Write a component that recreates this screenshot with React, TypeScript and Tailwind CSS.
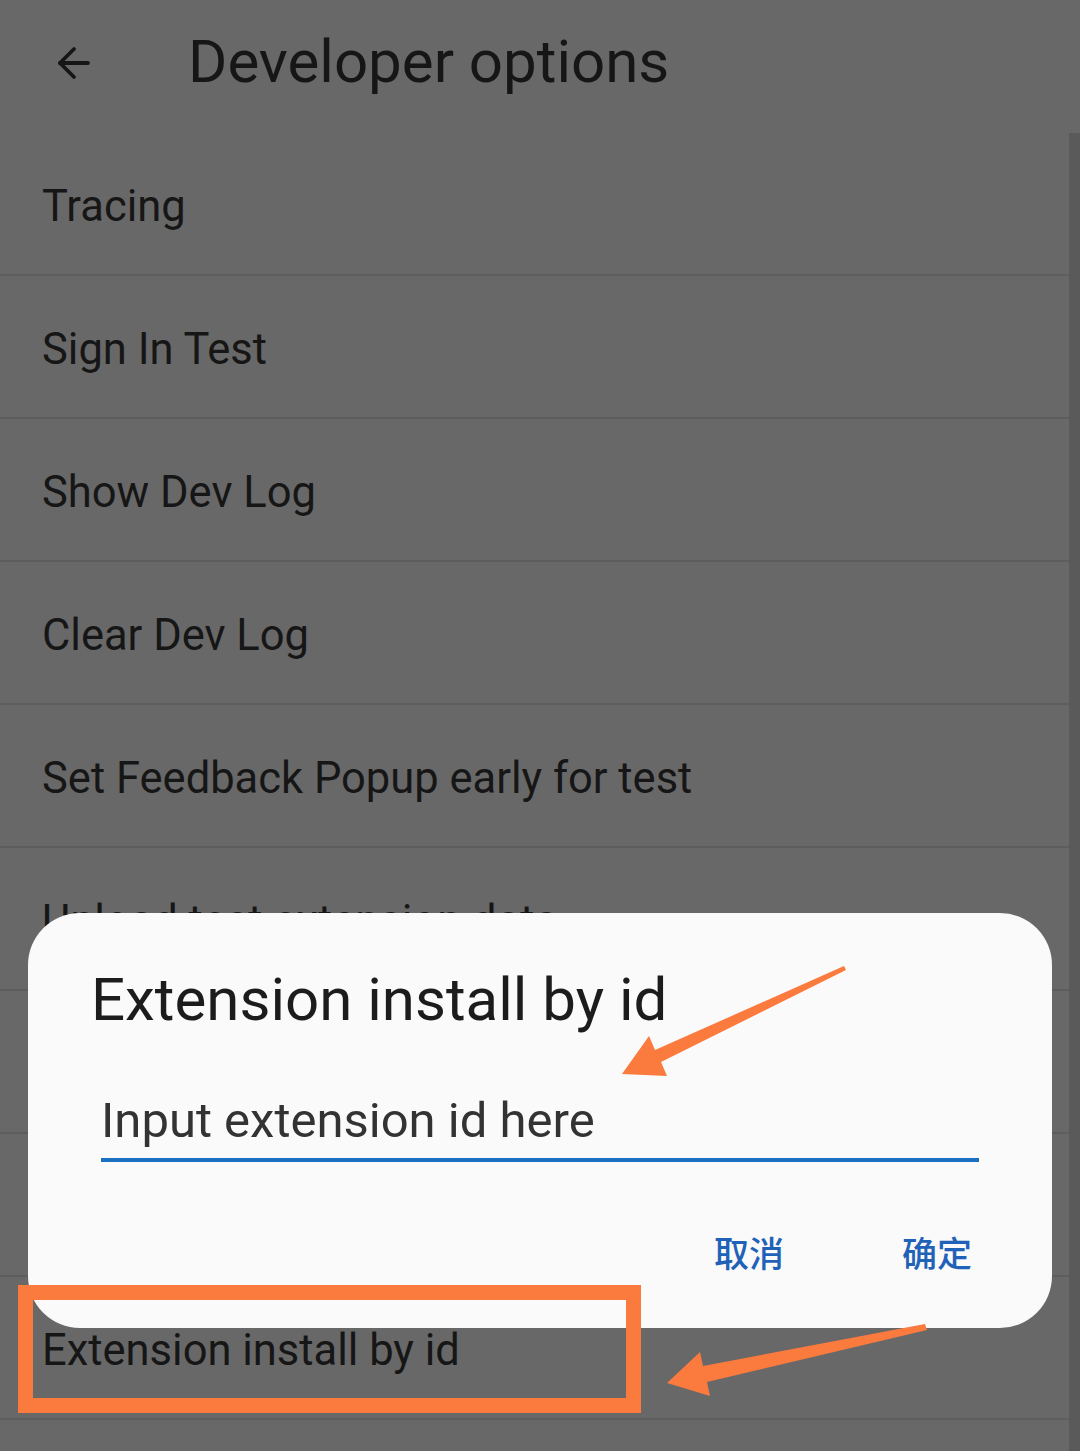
import { ArrowLeft } from "lucide-react";

const rows = [
  "Tracing",
  "Sign In Test",
  "Show Dev Log",
  "Clear Dev Log",
  "Set Feedback Popup early for test",
  "Unload test extension data",
  "Reset extensions",
  "Extension debug",
  "Extension install by id",
];

const Annotations = () => (
  <svg
    className="absolute left-0 top-0 pointer-events-none"
    width="1080"
    height="1451"
    viewBox="0 0 1080 1451"
  >
    {/* arrow pointing at the input */}
    <polygon
      points="844,966 655,1050 649,1036 622,1074 667,1076 661,1062 846,970"
      fill="#fb7a3e"
    />
    {/* arrow pointing at the list row */}
    <polygon
      points="925,1324 703,1366 700,1352 667,1383 710,1396 707,1382 927,1330"
      fill="#fb7a3e"
    />
    <rect
      x="25.5"
      y="1292.5"
      width="608"
      height="113"
      fill="none"
      stroke="#fb7a3e"
      strokeWidth="15"
    />
  </svg>
);

export default function App() {
  return (
    <div
      className="relative w-[1080px] h-[1451px] overflow-hidden bg-[#686868] text-[#161616]"
      style={{ fontFamily: "Roboto, 'Noto Sans CJK SC', sans-serif" }}
    >
      <header className="h-[133px] flex items-center">
        <div className="w-[188px] flex items-center pl-[50px] pb-[8px]">
          <ArrowLeft className="w-[48px] h-[48px]" strokeWidth={1.9} />
        </div>
        <h1 className="text-[60px] leading-none pb-[10px]">Developer options</h1>
      </header>

      <div className="flex">
        <ul className="flex-1">
          {rows.map((r) => (
            <li
              key={r}
              className="h-[143px] flex items-center pl-[42px] pt-[7px] border-b-2 border-[#5d5d5d] text-[43.5px]"
            >
              {r}
            </li>
          ))}
          <li className="h-[143px] border-b-2 border-[#5d5d5d]" />
        </ul>
        <div className="w-[11px] h-[1318px] bg-[#5a5a5a]" />
      </div>

      <div className="absolute left-[28px] top-[913px] w-[1024px] h-[415px] rounded-[52px] bg-[#fafafa] flex flex-col">
        <h2 className="pl-[63px] pt-[57px] text-[60px] leading-[60px] text-[#1c1c1c]">
          Extension install by id
        </h2>
        <div className="mx-[73px] mt-[68px] pb-[14px] border-b-4 border-[#1a6fc2]">
          <span className="text-[49px] leading-[46px] text-[#333333]">
            Input extension id here
          </span>
        </div>
        <div className="flex justify-end gap-[118px] pr-[80px] mt-[76px] text-[35px] leading-[36px] text-[#1f62b8] font-medium">
          <button>取消</button>
          <button>确定</button>
        </div>
      </div>

      <Annotations />
    </div>
  );
}
